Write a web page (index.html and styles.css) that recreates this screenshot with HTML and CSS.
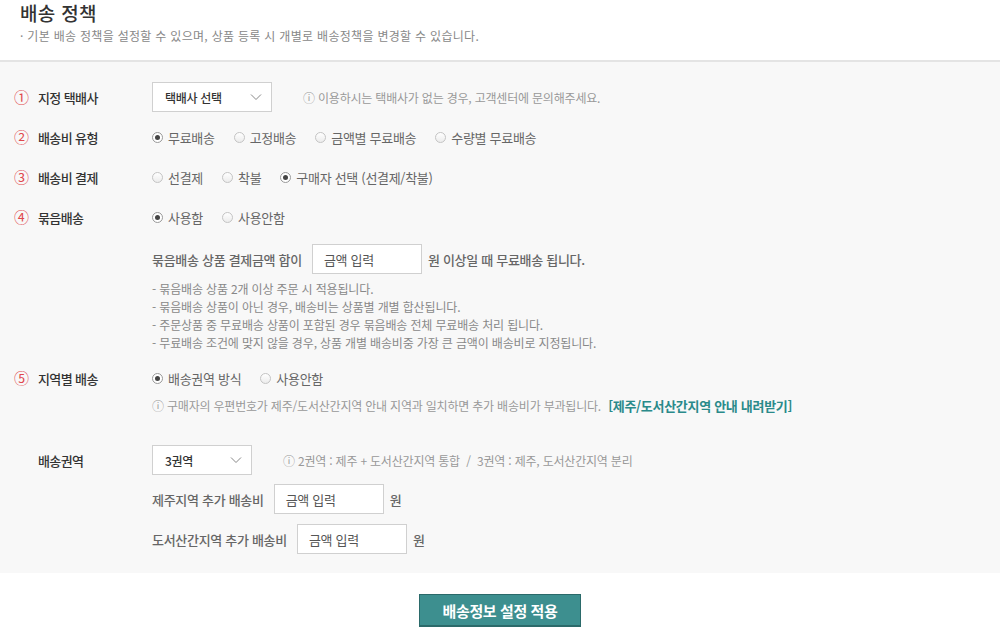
FILE: index.html
```html
<!DOCTYPE html>
<html lang="ko">
<head>
<meta charset="utf-8">
<link rel="stylesheet" href="styles.css">
</head>
<body>
<div class="page">
  <header class="head">
    <h1 class="title">배송 정책</h1>
    <p class="subtitle">· 기본 배송 정책을 설정할 수 있으며, 상품 등록 시 개별로 배송정책을 변경할 수 있습니다.</p>
  </header>
  <section class="panel">
    <div class="row">
      <div class="label"><span class="num">①</span>지정 택배사</div>
      <div class="field">
        <div class="select sel-courier"><span>택배사 선택</span><svg class="chev" width="12" height="8" viewBox="0 0 12 8"><path d="M1 1.5 L6 6.5 L11 1.5" fill="none" stroke="#888" stroke-width="1"/></svg></div>
        <span class="help help-gap">ⓘ 이용하시는 택배사가 없는 경우, 고객센터에 문의해주세요.</span>
      </div>
    </div>
    <div class="row">
      <div class="label"><span class="num">②</span>배송비 유형</div>
      <div class="field radios">
        <label class="radio"><span class="dot on"></span>무료배송</label>
        <label class="radio"><span class="dot"></span>고정배송</label>
        <label class="radio"><span class="dot"></span>금액별 무료배송</label>
        <label class="radio"><span class="dot"></span>수량별 무료배송</label>
      </div>
    </div>
    <div class="row">
      <div class="label"><span class="num">③</span>배송비 결제</div>
      <div class="field radios">
        <label class="radio"><span class="dot"></span>선결제</label>
        <label class="radio"><span class="dot"></span>착불</label>
        <label class="radio"><span class="dot on"></span>구매자 선택 (선결제/착불)</label>
      </div>
    </div>
    <div class="row">
      <div class="label"><span class="num">④</span>묶음배송</div>
      <div class="field radios">
        <label class="radio"><span class="dot on"></span>사용함</label>
        <label class="radio"><span class="dot"></span>사용안함</label>
      </div>
    </div>
    <div class="sub">
      <div class="inline-row bundle">
        <span class="strong-text">묶음배송 상품 결제금액 합이</span>
        <div class="input">금액 입력</div>
        <span class="strong-text">원 이상일 때 무료배송 됩니다.</span>
      </div>
      <ul class="notes">
        <li>- 묶음배송 상품 2개 이상 주문 시 적용됩니다.</li>
        <li>- 묶음배송 상품이 아닌 경우, 배송비는 상품별 개별 합산됩니다.</li>
        <li>- 주문상품 중 무료배송 상품이 포함된 경우 묶음배송 전체 무료배송 처리 됩니다.</li>
        <li>- 무료배송 조건에 맞지 않을 경우, 상품 개별 배송비중 가장 큰 금액이 배송비로 지정됩니다.</li>
      </ul>
    </div>
    <div class="row row5">
      <div class="label"><span class="num">⑤</span>지역별 배송</div>
      <div class="field radios">
        <label class="radio"><span class="dot on"></span>배송권역 방식</label>
        <label class="radio"><span class="dot"></span>사용안함</label>
      </div>
    </div>
    <div class="sub">
      <p class="help info">ⓘ 구매자의 우편번호가 제주/도서산간지역 안내 지역과 일치하면 추가 배송비가 부과됩니다. <a class="link">[제주/도서산간지역 안내 내려받기]</a></p>
    </div>
    <div class="row zone-row">
      <div class="label plain">배송권역</div>
      <div class="field">
        <div class="select sel-zone"><span>3권역</span><svg class="chev" width="12" height="8" viewBox="0 0 12 8"><path d="M1 1.5 L6 6.5 L11 1.5" fill="none" stroke="#888" stroke-width="1"/></svg></div>
        <span class="help help-gap">ⓘ 2권역 : 제주 + 도서산간지역 통합 &nbsp;/&nbsp; 3권역 : 제주, 도서산간지역 분리</span>
      </div>
    </div>
    <div class="sub">
      <div class="inline-row fee">
        <span class="strong-text">제주지역 추가 배송비</span>
        <div class="input">금액 입력</div>
        <span class="strong-text">원</span>
      </div>
      <div class="inline-row fee">
        <span class="strong-text">도서산간지역 추가 배송비</span>
        <div class="input">금액 입력</div>
        <span class="strong-text">원</span>
      </div>
    </div>
  </section>
  <div class="actions">
    <button class="btn">배송정보 설정 적용</button>
  </div>
</div>
</body>
</html>
```
FILE: styles.css
```css
* { box-sizing: border-box; }
html, body { margin: 0; padding: 0; background: #fff; }
body {
  font-family: "Noto Sans CJK KR", "Noto Sans", sans-serif;
  color: #333;
  width: 1000px;
  height: 628px;
  overflow: hidden;
}
.head {
  padding: 0 20px 0 20px;
  height: 62px;
  border-bottom: 2px solid #e4e4e4;
}
.title {
  margin: 0;
  font-size: 19px;
  font-weight: 500;
  line-height: 25px;
  color: #333;
  letter-spacing: 0.3px;
}
.subtitle {
  margin: 3px 0 0;
  font-size: 12px;
  line-height: 16px;
  color: #888;
  letter-spacing: 0.3px;
}
.panel {
  background: #f8f8f8;
  padding: 20px 0 19px 14px;
  display: flex;
  flex-direction: column;
}
.row {
  display: flex;
  align-items: center;
  height: 30px;
  margin-bottom: 10px;
}
.label {
  width: 138px;
  flex: none;
  display: flex;
  align-items: center;
  font-size: 13px;
  font-weight: 500;
  color: #333;
  letter-spacing: -0.6px;
}
.label.plain { padding-left: 24px; }
.num {
  color: #e0474c;
  font-size: 15px;
  font-weight: 400;
  width: 24px;
  margin-top: -1px;
}
.field {
  display: flex;
  align-items: center;
}
.select {
  height: 30px;
  border: 1px solid #d0d0d0;
  background: #fff;
  display: flex;
  align-items: center;
  justify-content: space-between;
  padding: 0 9px 0 12px;
  font-size: 12px;
  font-weight: 500;
  color: #333;
  letter-spacing: -0.3px;
}
.sel-courier { width: 120px; }
.sel-zone { width: 100px; }
.help {
  font-size: 12px;
  color: #999;
  letter-spacing: -0.2px;
}
.help-gap { margin-left: 31px; }
.radios { gap: 19px; }
.radio {
  display: flex;
  align-items: center;
  font-size: 13px;
  color: #666;
  letter-spacing: -0.3px;
}
.dot {
  width: 11px;
  height: 11px;
  border-radius: 50%;
  border: 1px solid #c4c4c4;
  background: linear-gradient(#fff, #ececec);
  margin-right: 5px;
  position: relative;
}
.dot.on {
  border-color: #999;
  background: #fff;
}
.dot.on::after {
  content: "";
  position: absolute;
  left: 2px;
  top: 2px;
  width: 5px;
  height: 5px;
  border-radius: 50%;
  background: #444;
}
.sub {
  padding-left: 138px;
}
.inline-row {
  display: flex;
  align-items: center;
  gap: 6px;
  height: 30px;
}
.bundle { margin-top: 2px; }
.strong-text {
  font-size: 13px;
  font-weight: 500;
  color: #666;
  letter-spacing: -0.3px;
}
.input {
  width: 110px;
  height: 30px;
  border: 1px solid #d0d0d0;
  background: #fff;
  display: flex;
  align-items: center;
  padding-left: 11px;
  font-size: 13px;
  color: #555;
  letter-spacing: -0.3px;
  margin-left: 4px;
}
.notes {
  list-style: none;
  margin: 6px 0 0;
  padding: 0;
  font-size: 12px;
  line-height: 18px;
  color: #888;
  letter-spacing: -0.15px;
}
.row5 { margin-top: 11px; margin-bottom: 4px; }
.info {
  margin: 0;
  line-height: 18px;
}
.link {
  color: #2a8a8a;
  font-weight: 700;
  font-size: 13px;
  letter-spacing: -0.3px;
  margin-left: 4px;
}
.zone-row { margin-top: 30px; margin-bottom: 9px; }
.fee { margin-bottom: 10px; }
.fee:last-child { margin-bottom: 0; }
.actions {
  display: flex;
  justify-content: center;
  padding-top: 21px;
}
.btn {
  width: 162px;
  height: 33px;
  background: #3d8f8f;
  border: 1px solid #2b6a6a;
  border-bottom-width: 2px;
  color: #fff;
  font-family: "Noto Sans CJK KR", sans-serif;
  font-size: 15px;
  font-weight: 700;
  letter-spacing: -0.4px;
  padding: 0;
}
```
